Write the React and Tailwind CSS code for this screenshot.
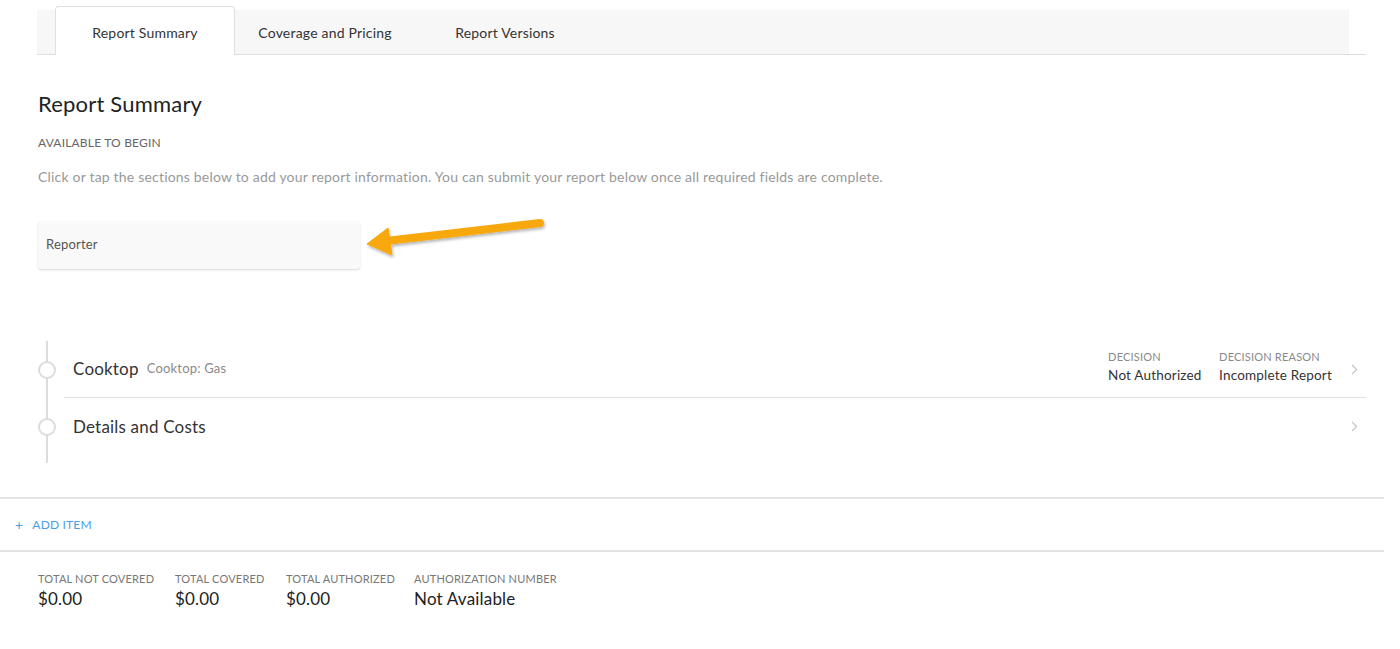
import { ChevronRight } from "lucide-react";

const tabs = ["Report Summary", "Coverage and Pricing", "Report Versions"];

const totals = [
  { label: "TOTAL NOT COVERED", value: "$0.00", w: "w-[137px]" },
  { label: "TOTAL COVERED", value: "$0.00", w: "w-[111px]" },
  { label: "TOTAL AUTHORIZED", value: "$0.00", w: "w-[128px]" },
  { label: "AUTHORIZATION NUMBER", value: "Not Available", w: "w-[200px]" },
];

function TimelineRow({ title, sub, decision, last }) {
  return (
    <div className="flex h-[57px]">
      <div className="w-[64px] relative">
        <div className="absolute left-[46px] top-0 bottom-0 w-[2px] bg-[#dcdcdc]" />
        <div className="absolute left-[38px] top-[20px] w-[18px] h-[18px] rounded-full border-2 border-[#dcdcdc] bg-white" />
      </div>
      <div className={`flex-1 flex items-center pl-[9px] pr-[3px] ${last ? "" : "border-b border-[#e2e2e2]"}`}>
        <span className="text-[17px] text-[#333]">{title}</span>
        {sub && <span className="ml-[8px] text-[13px] text-[#8a8a8a]">{sub}</span>}
        <div className="flex-1" />
        {decision && (
          <div className="flex mr-[14px] mt-[-2px]">
            <div className="flex flex-col w-[111px]">
              <span className="text-[11px] text-[#8a8a8a] leading-[14px]">DECISION</span>
              <span className="text-[13.5px] text-[#333] leading-[22px]">Not Authorized</span>
            </div>
            <div className="flex flex-col">
              <span className="text-[11px] text-[#8a8a8a] leading-[14px]">DECISION REASON</span>
              <span className="text-[13.5px] text-[#333] leading-[22px]">Incomplete Report</span>
            </div>
          </div>
        )}
        <ChevronRight className="w-[17px] h-[17px] text-[#c4c4c4]" strokeWidth={1.5} />
      </div>
    </div>
  );
}

export default function App() {
  return (
    <div
      className="w-[1384px] bg-white relative tracking-[0.012em]"
      style={{ fontFamily: "Lato, 'Open Sans', sans-serif" }}
    >
      {/* tab bar */}
      <div className="ml-[37px] w-[1329px] border-b border-[#dedede] pt-[10px]">
        <div className="w-[1312px] h-[44px] bg-[#f7f7f7] flex items-end pl-[18px]">
          {tabs.map((t, i) => (
            <div
              key={t}
              className={`w-[180px] flex items-center justify-center text-[14px] text-[#333] ${
                i === 0
                  ? "h-[49px] mb-[-1px] bg-white border border-b-0 border-[#e0e0e0] rounded-t-[4px] pt-[2px]"
                  : "h-[44px]"
              }`}
            >
              {t}
            </div>
          ))}
        </div>
      </div>

      <div className="pl-[38px]">
        <h1 className="mt-[35px] text-[22px] leading-[28px] text-[#222]">Report Summary</h1>
        <div className="mt-[17px] text-[12px] leading-[16px] text-[#666]">AVAILABLE TO BEGIN</div>
        <p className="mt-[17px] text-[14px] leading-[18px] text-[#999]">
          Click or tap the sections below to add your report information. You can submit your report below once all required fields are complete.
        </p>
        <div className="mt-[35px] w-[322px] h-[48px] bg-[#f9f9f9] rounded-[3px] shadow-[0_1px_2px_rgba(0,0,0,0.15)] flex items-center pl-[8px] text-[13px] text-[#555]">
          Reporter
        </div>
      </div>

      {/* annotation arrow */}
      <svg className="absolute left-[360px] top-[212px]" width="190" height="50" viewBox="0 0 190 50">
        <defs>
          <filter id="sh" x="-10%" y="-30%" width="130%" height="180%">
            <feDropShadow dx="1" dy="2" stdDeviation="1.5" floodColor="#000" floodOpacity="0.3" />
          </filter>
        </defs>
        <g filter="url(#sh)" fill="#f6a80c" stroke="#f6a80c">
          <line x1="180" y1="11" x2="26" y2="29" strokeWidth="8" strokeLinecap="round" />
          <polygon points="7,32 28,16 32,43" strokeWidth="1" strokeLinejoin="round" />
        </g>
      </svg>

      {/* timeline */}
      <div className="mt-[72px] pr-[18px]">
        <TimelineRow title="Cooktop" sub="Cooktop: Gas" decision />
        <TimelineRow title="Details and Costs" last />
        <div className="h-[8px] relative">
          <div className="absolute left-[46px] top-0 bottom-0 w-[2px] bg-[#dcdcdc]" />
        </div>
      </div>

      <div className="mt-[34px] border-t-2 border-[#e4e4e4] h-[53px] flex items-center pl-[15px] text-[12px] text-[#4a9ee6]">
        <span className="text-[14px] mr-[9px]">+</span>
        ADD ITEM
      </div>
      <div className="border-t-2 border-[#e4e4e4] pl-[38px] pt-[20px] flex">
        {totals.map((t) => (
          <div key={t.label} className={`flex flex-col ${t.w}`}>
            <span className="text-[11px] leading-[14px] text-[#777]">{t.label}</span>
            <span className="text-[17px] leading-[26px] text-[#222]">{t.value}</span>
          </div>
        ))}
      </div>
      <div className="h-[40px]" />
    </div>
  );
}
